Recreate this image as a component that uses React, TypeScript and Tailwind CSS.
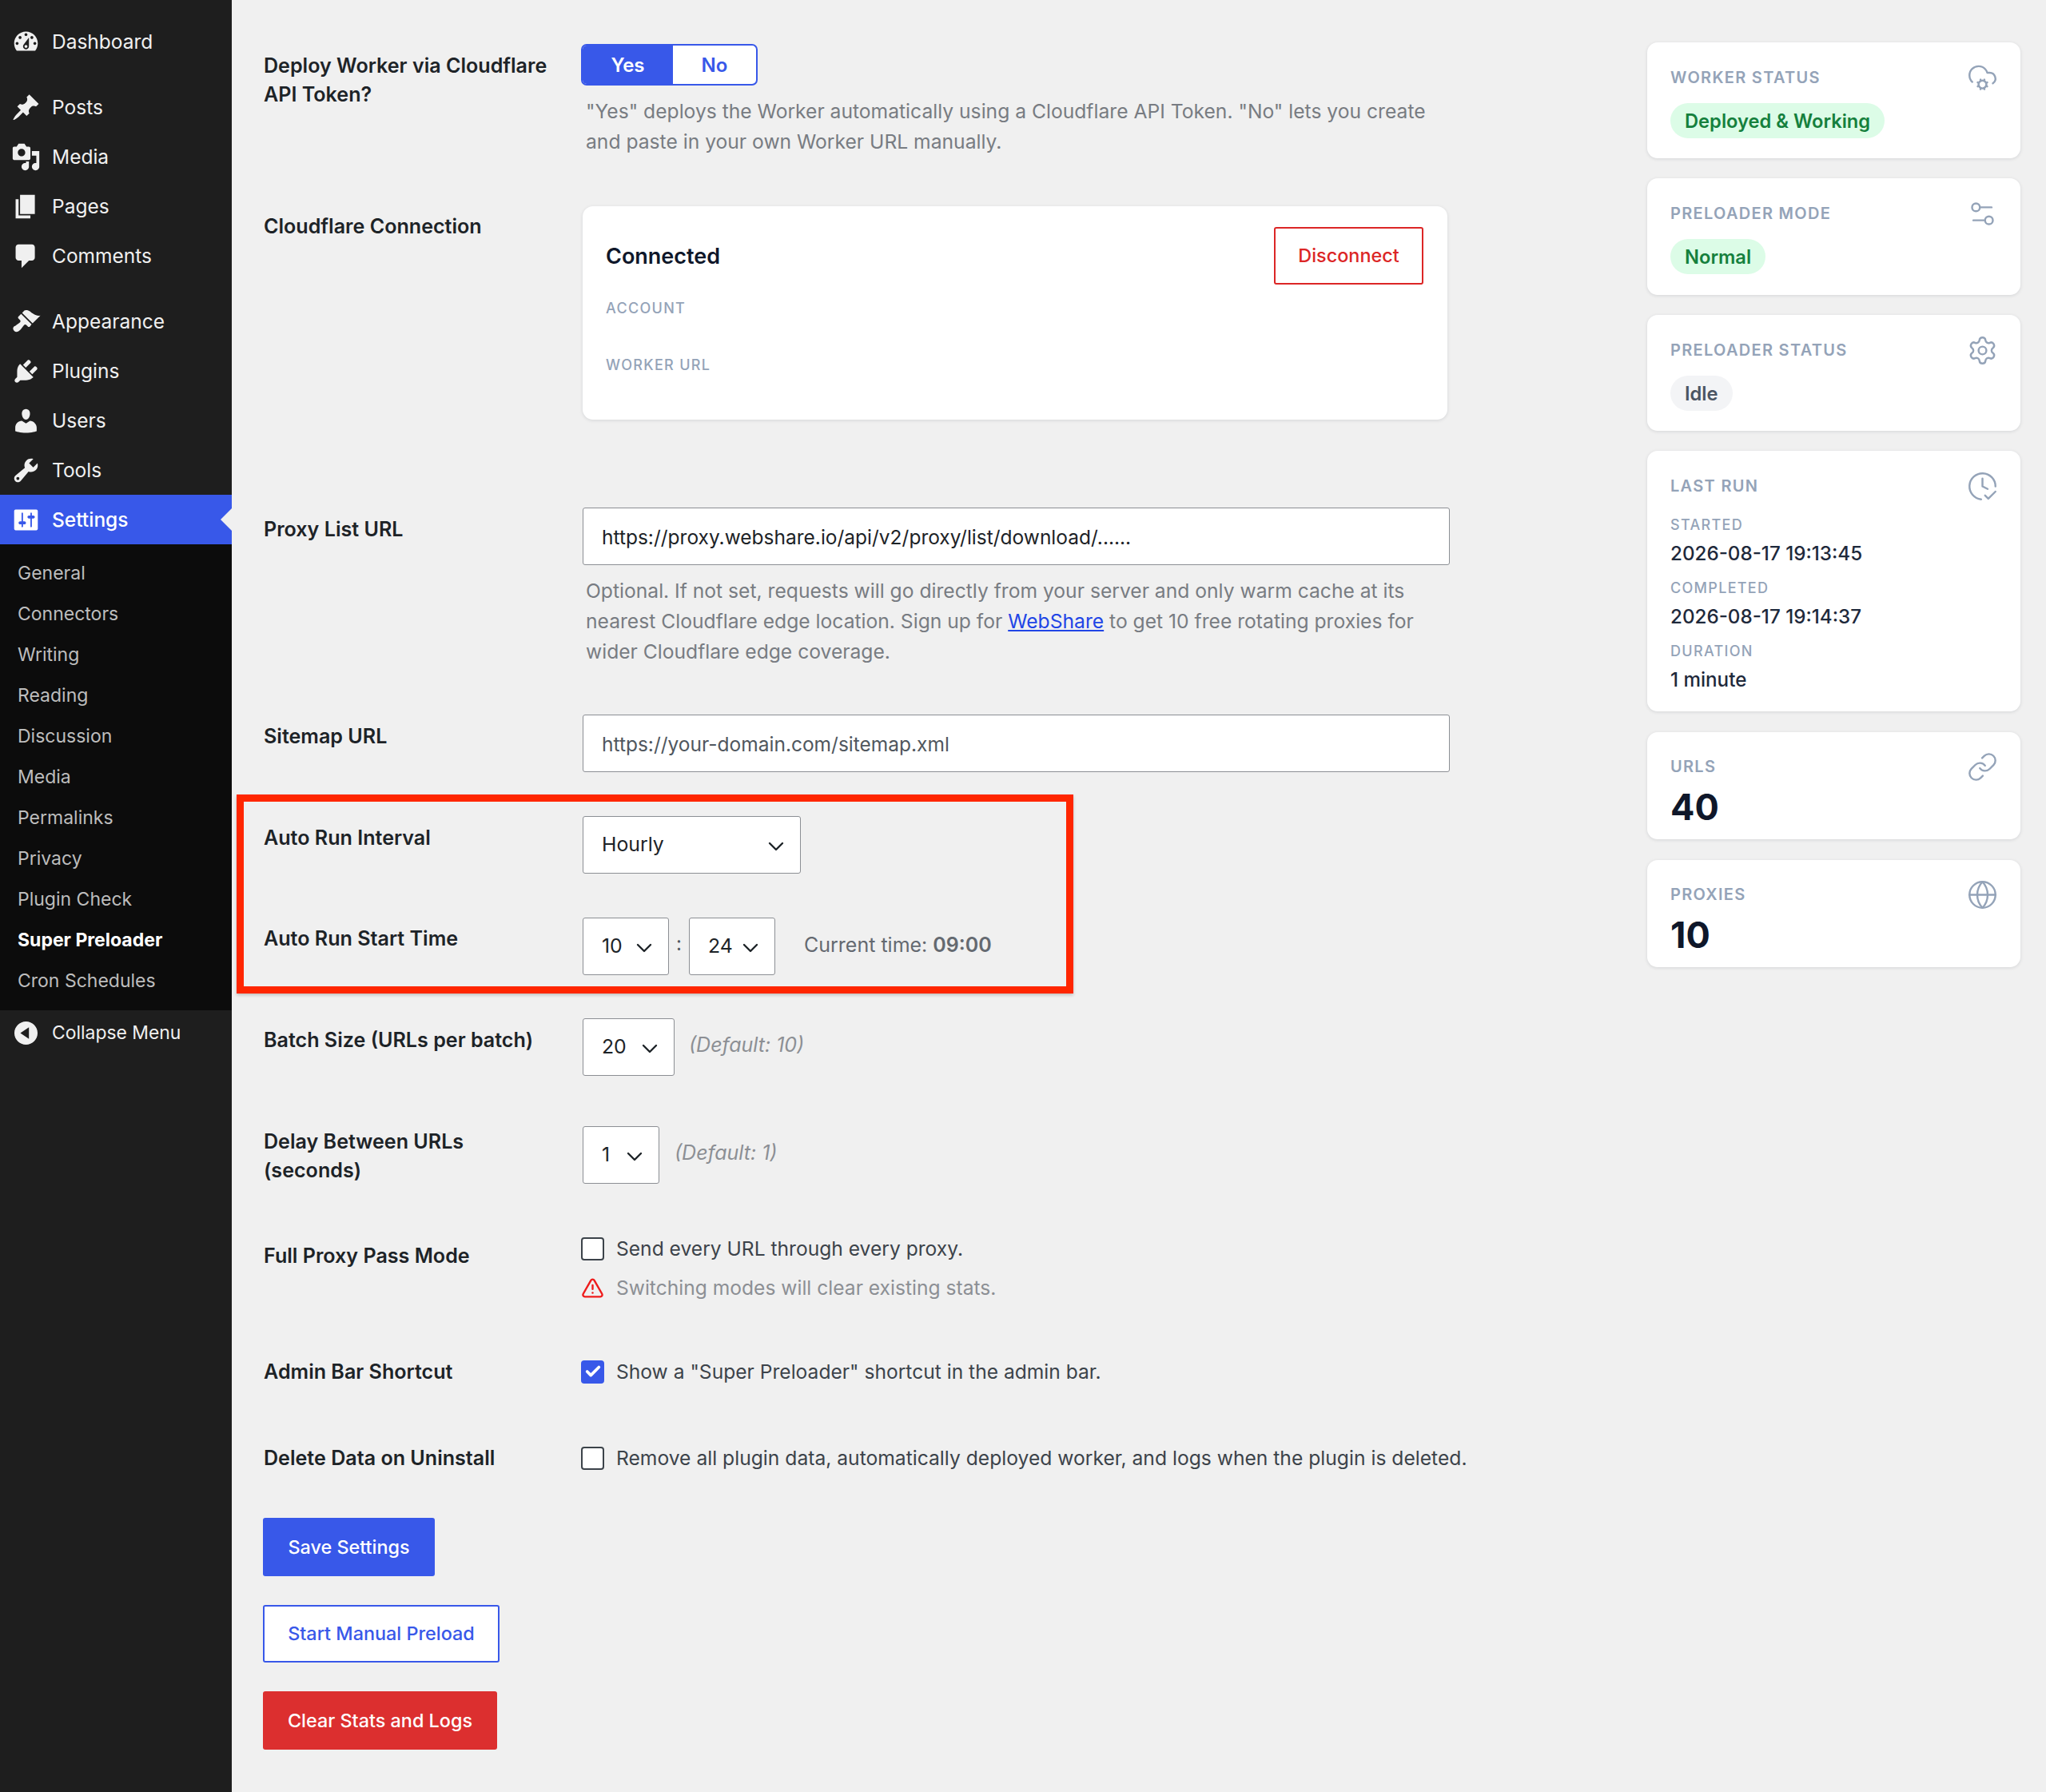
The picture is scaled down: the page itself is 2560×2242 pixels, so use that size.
import React from 'react';
import { ChevronDown, Check, CloudCog, Settings2, Settings, ClockCheck, Link, Globe, TriangleAlert } from 'lucide-react';

const dash = {
  dashboard: 'M3.76 16h12.48c1.1-1.37 1.76-3.11 1.76-5 0-4.42-3.58-8-8-8s-8 3.58-8 8c0 1.89.66 3.63 1.76 5zM10 4c.55 0 1 .45 1 1s-.45 1-1 1-1-.45-1-1 .45-1 1-1zM6 6c.55 0 1 .45 1 1s-.45 1-1 1-1-.45-1-1 .45-1 1-1zm8 0c.55 0 1 .45 1 1s-.45 1-1 1-1-.45-1-1 .45-1 1-1zm-5.37 5.55L12 7v6c0 1.1-.9 2-2 2s-2-.9-2-2c0-.57.24-1.08.63-1.45zM4 10c.55 0 1 .45 1 1s-.45 1-1 1-1-.45-1-1 .45-1 1-1zm12 0c.55 0 1 .45 1 1s-.45 1-1 1-1-.45-1-1 .45-1 1-1zm-5 3c0-.55-.45-1-1-1s-1 .45-1 1 .45 1 1 1 1-.45 1-1z',
  post: 'M10.44 3.02l1.82-1.82 6.36 6.35-1.83 1.82c-1.05-.68-2.48-.57-3.41.36l-.75.75c-.92.93-1.04 2.35-.35 3.41l-1.83 1.82-2.41-2.41-2.8 2.79c-.42.42-3.38 2.71-3.8 2.29s1.86-3.39 2.28-3.81l2.79-2.79L4.1 9.36l1.83-1.82c1.05.69 2.48.57 3.4-.36l.75-.75c.93-.92 1.05-2.35.36-3.41z',
  media: 'M13 11V4c0-.55-.45-1-1-1h-1.67L9 1H5L3.67 3H2c-.55 0-1 .45-1 1v7c0 .55.45 1 1 1h10c.55 0 1-.45 1-1zM7 4.5c1.38 0 2.5 1.12 2.5 2.5S8.38 9.5 7 9.5 4.5 8.38 4.5 7 5.62 4.5 7 4.5zM14 6h5v10.5c0 1.38-1.12 2.5-2.5 2.5S14 17.88 14 16.5s1.12-2.5 2.5-2.5c.17 0 .34.02.5.05V9h-3V6zm-4 8.05V13h2v3.5c0 1.38-1.12 2.5-2.5 2.5S7 17.88 7 16.5 8.12 14 9.5 14c.17 0 .34.02.5.05z',
  page: 'M6 15V2h10v13H6zm-1 1h8v2H3V5h2v11z',
  comments: 'M5 2h9c1.1 0 2 .9 2 2v7c0 1.1-.9 2-2 2h-2l-5 5v-5H5c-1.1 0-2-.9-2-2V4c0-1.1.9-2 2-2z',
  appearance: 'M14.48 11.06L7.41 3.99l1.5-1.5c.5-.56 2.3-.47 3.51.32 1.21.8 1.43 1.28 2.91 2.1 1.18.64 2.45 1.26 4.45.85zm-.71.71L6.7 4.7 4.93 6.47c-.39.39-.39 1.02 0 1.41l1.06 1.06c.39.39.39 1.03 0 1.42-.6.6-1.43 1.11-2.21 1.69-.35.26-.7.53-1.01.84C1.43 13.23.65 14.8 2 16.15c1.35 1.35 2.92.57 4.26-.78.31-.31.58-.66.84-1.01.58-.78 1.09-1.61 1.69-2.21.39-.39 1.03-.39 1.42 0l1.06 1.06c.39.39 1.02.39 1.41 0z',
  plugins: 'M13.11 4.36L9.87 7.6 8 5.73l3.24-3.24c.35-.34 1.05-.2 1.56.32.52.51.66 1.21.31 1.55zm-8 1.77l.91-1.12 9.01 9.01-1.19.84c-.71.71-2.63 1.16-3.82 1.16H6.14L4.9 17.26c-.59.59-1.54.59-2.12 0-.59-.58-.59-1.53 0-2.12l1.24-1.24v-3.88c0-1.13.4-3.19 1.09-3.89zm7.26 3.97l3.24-3.24c.34-.35 1.04-.21 1.55.31.52.51.66 1.21.31 1.55l-3.24 3.25z',
  users: 'M10 9.25c-2.27 0-2.73-3.44-2.73-3.44C7 4.02 7.82 2 9.97 2c2.16 0 2.98 2.02 2.71 3.81 0 0-.41 3.44-2.68 3.44zm0 2.57L12.72 10c2.39 0 4.52 2.33 4.52 4.53v2.49s-3.65 1.13-7.24 1.13c-3.65 0-7.24-1.13-7.24-1.13v-2.49c0-2.25 1.94-4.48 4.47-4.48z',
  tools: 'M16.68 9.77c-1.34 1.34-3.3 1.67-4.95.99l-5.41 6.52c-.99.99-2.59.99-3.58 0s-.99-2.59 0-3.57l6.52-5.42c-.68-1.65-.35-3.61.99-4.95 1.28-1.28 3.12-1.62 4.72-1.06l-2.89 2.89 2.82 2.82 2.86-2.87c.53 1.58.18 3.39-1.08 4.65zM3.81 16.21c.4.39 1.04.39 1.43 0 .4-.4.4-1.04 0-1.43-.39-.4-1.03-.4-1.43 0-.39.39-.39 1.03 0 1.43z',
  settings: 'M18 16V4c0-.55-.45-1-1-1H3c-.55 0-1 .45-1 1v12c0 .55.45 1 1 1h14c.55 0 1-.45 1-1zM8 11h1c.55 0 1 .45 1 1s-.45 1-1 1H8v1.5c0 .28-.22.5-.5.5s-.5-.22-.5-.5V13H6c-.55 0-1-.45-1-1s.45-1 1-1h1V5.5c0-.28.22-.5.5-.5s.5.22.5.5V11zm5-2h-1c-.55 0-1-.45-1-1s.45-1 1-1h1V5.5c0-.28.22-.5.5-.5s.5.22.5.5V7h1c.55 0 1 .45 1 1s-.45 1-1 1h-1v5.5c0 .28-.22.5-.5.5s-.5-.22-.5-.5V9z',
  collapse: 'M10 2.16c4.33 0 7.84 3.51 7.84 7.84s-3.51 7.84-7.84 7.84S2.16 14.33 2.16 10 5.71 2.16 10 2.16zm2 11.72V6.12L6.18 9.97z',
};

const DashIcon = ({ d }: { d: string }) => (
  <svg viewBox="0 0 20 20" className="w-[37px] h-[37px] shrink-0 fill-current" fillRule="evenodd">
    <path d={d} />
  </svg>
);

const MenuItem = ({ icon, label, active, className = '' }: { icon: string; label: string; active?: boolean; className?: string }) => (
  <div className={`relative flex items-center h-[62px] pl-[14px] gap-[14px] text-[24.5px] ${active ? 'bg-[#3858e9] text-white font-medium' : 'text-[#f0f0f0]'} ${className}`}>
    <DashIcon d={icon} />
    <span>{label}</span>
    {active && (
      <span className="absolute right-0 top-[17px] w-0 h-0 border-y-[14px] border-y-transparent border-r-[14px] border-r-[#f0f0f0]" />
    )}
  </div>
);

const Sidebar = () => (
  <div className="w-[290px] shrink-0 bg-[#1e1e1e] pt-[21px]">
    <MenuItem icon={dash.dashboard} label="Dashboard" className="mb-[20px]" />
    <MenuItem icon={dash.post} label="Posts" />
    <MenuItem icon={dash.media} label="Media" />
    <MenuItem icon={dash.page} label="Pages" />
    <MenuItem icon={dash.comments} label="Comments" className="mb-[20px]" />
    <MenuItem icon={dash.appearance} label="Appearance" />
    <MenuItem icon={dash.plugins} label="Plugins" />
    <MenuItem icon={dash.users} label="Users" />
    <MenuItem icon={dash.tools} label="Tools" />
    <MenuItem icon={dash.settings} label="Settings" active />
    <div className="bg-[#0c0c0c] py-[11px] pl-[22px] text-[23px] text-[#bdbdbd]">
      {['General', 'Connectors', 'Writing', 'Reading', 'Discussion', 'Media', 'Permalinks', 'Privacy', 'Plugin Check'].map((s) => (
        <div key={s} className="h-[51px] flex items-center">{s}</div>
      ))}
      <div className="h-[51px] flex items-center font-bold text-white">Super Preloader</div>
      <div className="h-[51px] flex items-center">Cron Schedules</div>
    </div>
    <div className="flex items-center h-[57px] pl-[14px] gap-[14px] text-[22.9px] text-[#f0f0f0]">
      <DashIcon d={dash.collapse} />
      <span>Collapse Menu</span>
    </div>
  </div>
);

const Row = ({ label, className = '', labelClass = 'pt-[9px]', children }: { label: React.ReactNode; className?: string; labelClass?: string; children: React.ReactNode }) => (
  <div className={`flex ${className}`}>
    <div className={`w-[399px] shrink-0 text-[25.1px] leading-[36px] font-semibold text-[#1d2327] ${labelClass}`}>{label}</div>
    <div className="flex-1 min-w-0">{children}</div>
  </div>
);

const Select = ({ value, width }: { value: string; width: string }) => (
  <div className={`${width} h-[72px] shrink-0 flex items-center justify-between pl-[23px] pr-[14px] bg-white border border-[#8c8f94] rounded-[3px] text-[24.8px] text-[#1d2327]`}>
    <span>{value}</span>
    <ChevronDown className="w-[32px] h-[32px] mt-[3px] text-[#1d2327]" strokeWidth={1.8} />
  </div>
);

const TextInput = ({ value, muted }: { value: string; muted?: boolean }) => (
  <div className={`w-[1085px] h-[72px] flex items-center px-[23px] pt-[2px] bg-white border border-[#8c8f94] rounded-[3px] text-[24.5px] ${muted ? 'text-[#50575e]' : 'text-[#1d2327]'}`}>
    {value}
  </div>
);

const Checkbox = ({ checked }: { checked?: boolean }) => (
  <span className={`w-[29px] h-[29px] shrink-0 flex items-center justify-center rounded-[4px] ${checked ? 'bg-[#3858e9]' : 'bg-white border-2 border-[#3c434a]'}`}>
    {checked && <Check className="w-[22px] h-[22px] text-white" strokeWidth={4} />}
  </span>
);

const Help = ({ children, className = '' }: { children: React.ReactNode; className?: string }) => (
  <p className={`ml-[4px] text-[24.65px] leading-[38px] text-[#787c82] ${className}`}>{children}</p>
);

const Card = ({ label, icon: Icon, children, className = '' }: { label: string; icon: React.ElementType; children: React.ReactNode; className?: string }) => (
  <div className={`bg-white rounded-[13px] shadow-[0_1px_4px_rgba(15,23,42,0.12)] pl-[29px] pr-[28px] ${className}`}>
    <div className="flex items-center justify-between h-[24px]">
      <span className="text-[20px] font-semibold tracking-[1.3px] text-[#94a3b8] uppercase">{label}</span>
      <Icon className="w-[39px] h-[39px] text-[#94a3b8]" strokeWidth={1.5} />
    </div>
    {children}
  </div>
);

const Pill = ({ children, gray }: { children: React.ReactNode; gray?: boolean }) => (
  <span className={`inline-flex items-center h-[44px] px-[18px] pt-[2px] rounded-full text-[23.7px] font-semibold ${gray ? 'bg-[#f3f4f6] text-[#4b5563]' : 'bg-[#dcfce7] text-[#15803d]'}`}>
    {children}
  </span>
);

const RunStat = ({ label, value, className = '' }: { label: string; value: string; className?: string }) => (
  <div className={className}>
    <div className="text-[18px] leading-[22px] font-medium tracking-[1.3px] text-[#94a3b8] uppercase">{label}</div>
    <div className="mt-[11px] text-[24.2px] leading-[28px] font-medium text-[#1e293b]">{value}</div>
  </div>
);

const Sidebar2 = () => (
  <div className="w-[467px] shrink-0 mr-[32px] pt-[53px] flex flex-col">
    <Card label="Worker Status" icon={CloudCog} className="pt-[32px] pb-[25px]">
      <div className="mt-[20px] flex"><Pill>Deployed &amp; Working</Pill></div>
    </Card>
    <Card label="Preloader Mode" icon={Settings2} className="mt-[25px] pt-[32px] pb-[26px]">
      <div className="mt-[20px] flex"><Pill>Normal</Pill></div>
    </Card>
    <Card label="Preloader Status" icon={Settings} className="mt-[25px] pt-[32px] pb-[25px]">
      <div className="mt-[20px] flex"><Pill gray>Idle</Pill></div>
    </Card>
    <Card label="Last Run" icon={ClockCheck} className="mt-[25px] pt-[32px] pb-[25px]">
      <RunStat label="Started" value="2026-08-17 19:13:45" className="mt-[26px]" />
      <RunStat label="Completed" value="2026-08-17 19:14:37" className="mt-[18px]" />
      <RunStat label="Duration" value="1 minute" className="mt-[18px]" />
    </Card>
    <Card label="URLs" icon={Link} className="mt-[26px] pt-[31px] pb-[13px]">
      <div className="mt-[12px] text-[45px] leading-[54px] font-bold text-[#0f172a]">40</div>
    </Card>
    <Card label="Proxies" icon={Globe} className="mt-[26px] pt-[31px] pb-[13px]">
      <div className="mt-[12px] text-[45px] leading-[54px] font-bold text-[#0f172a]">10</div>
    </Card>
  </div>
);

const Form = () => (
  <div className="flex-1 min-w-0 pl-[40px] pt-[55px]">
    <Row label={<>Deploy Worker via Cloudflare<br />API Token?</>}>
      <div className="flex ml-[-2px] w-[221px] h-[52px] border-2 border-[#3858e9] rounded-[7px] overflow-hidden bg-white text-[24px] font-semibold">
        <div className="w-[113px] pt-[2px] flex items-center justify-center bg-[#3858e9] text-white">Yes</div>
        <div className="flex-1 pt-[2px] flex items-center justify-center text-[#3858e9]">No</div>
      </div>
      <Help className="mt-[13px]">"Yes" deploys the Worker automatically using a Cloudflare API Token. "No" lets you create<br />and paste in your own Worker URL manually.</Help>
    </Row>

    <Row label="Cloudflare Connection" labelClass="pt-[7px]" className="mt-[62px]">
      <div className="w-[1082px] h-[267px] bg-white rounded-[13px] shadow-[0_1px_4px_rgba(15,23,42,0.12)] pl-[29px] pr-[30px] pt-[26px]">
        <div className="flex items-start justify-between">
          <div className="pt-[19px] text-[27px] leading-[36px] font-semibold text-[#0f172a]">Connected</div>
          <div className="w-[187px] h-[72px] flex items-center justify-center bg-white border-2 border-[#dc2626] rounded-[3px] text-[23.4px] font-medium text-[#dc2626]">Disconnect</div>
        </div>
        <div className="mt-[18px] text-[18px] leading-[24px] font-medium tracking-[1.3px] text-[#94a3b8]">ACCOUNT</div>
        <div className="mt-[47px] text-[18px] leading-[24px] font-medium tracking-[1.3px] text-[#94a3b8]">WORKER URL</div>
      </div>
    </Row>

    <Row label="Proxy List URL" className="mt-[110px]">
      <TextInput value="https://proxy.webshare.io/api/v2/proxy/list/download/......" />
      <Help className="mt-[13px]">
        Optional. If not set, requests will go directly from your server and only warm cache at its<br />
        nearest Cloudflare edge location. Sign up for <span className="text-[#2145e6] underline">WebShare</span> to get 10 free rotating proxies for<br />
        wider Cloudflare edge coverage.
      </Help>
    </Row>

    <Row label="Sitemap URL" className="mt-[60px]">
      <TextInput value="https://your-domain.com/sitemap.xml" muted />
    </Row>

    <Row label="Auto Run Interval" className="mt-[55px]">
      <Select value="Hourly" width="w-[273px]" />
    </Row>

    <Row label="Auto Run Start Time" labelClass="pt-[8px]" className="mt-[55px]">
      <div className="flex items-center">
        <Select value="10" width="w-[108px]" />
        <span className="w-[25px] text-center text-[24px] text-[#50575e] mt-[-6px]">:</span>
        <Select value="24" width="w-[108px]" />
        <span className="ml-[36px] mt-[-2px] text-[25px] text-[#646970]">Current time: <strong className="font-semibold">09:00</strong></span>
      </div>
    </Row>

    <Row label="Batch Size (URLs per batch)" className="mt-[54px]">
      <div className="flex items-center">
        <Select value="20" width="w-[115px]" />
        <span className="ml-[18px] mt-[-4px] text-[25px] italic text-[#8c8f94]">(Default: 10)</span>
      </div>
    </Row>

    <Row label={<>Delay Between URLs<br />(seconds)</>} labelClass="pt-[1px]" className="mt-[63px]">
      <div className="flex items-center">
        <Select value="1" width="w-[96px]" />
        <span className="ml-[19px] mt-[-4px] text-[25px] italic text-[#8c8f94]">(Default: 1)</span>
      </div>
    </Row>

    <Row label="Full Proxy Pass Mode" labelClass="pt-[6px]" className="mt-[65px]">
      <div className="flex items-center ml-[-2px] h-[30px] gap-[15px] text-[24.6px] text-[#3c434a]">
        <Checkbox />
        <span>Send every URL through every proxy.</span>
      </div>
      <div className="flex items-center ml-[-2px] h-[30px] mt-[19px] gap-[15px] text-[24.6px] text-[#8c8f94]">
        <TriangleAlert className="w-[29px] h-[29px] text-[#ee1c1c]" strokeWidth={2} />
        <span>Switching modes will clear existing stats.</span>
      </div>
    </Row>

    <Row label="Admin Bar Shortcut" labelClass="mt-[-3px]" className="mt-[75px]">
      <div className="flex items-center ml-[-2px] h-[30px] gap-[15px] text-[24.6px] text-[#3c434a]">
        <Checkbox checked />
        <span>Show a "Super Preloader" shortcut in the admin bar.</span>
      </div>
    </Row>

    <Row label="Delete Data on Uninstall" labelClass="mt-[-3px]" className="mt-[75px]">
      <div className="flex items-center ml-[-2px] h-[30px] gap-[15px] text-[24.65px] text-[#3c434a] whitespace-nowrap">
        <Checkbox />
        <span>Remove all plugin data, automatically deployed worker, and logs when the plugin is deleted.</span>
      </div>
    </Row>

    <div className="mt-[57px] ml-[-1px] flex flex-col items-start gap-[36px] text-[23.4px] font-medium">
      <div className="w-[215px] h-[73px] flex items-center justify-center bg-[#3858e9] text-white rounded-[3px]">Save Settings</div>
      <div className="w-[296px] h-[72px] flex items-center justify-center bg-white border-2 border-[#3858e9] text-[#3858e9] rounded-[3px]">Start Manual Preload</div>
      <div className="w-[293px] h-[73px] flex items-center justify-center bg-[#dc2f2f] text-white rounded-[3px]">Clear Stats and Logs</div>
    </div>
  </div>
);

export default function App() {
  return (
    <div className="flex w-[2560px] h-[2242px] overflow-hidden bg-[#f0f0f0] font-['Inter',sans-serif]">
      <Sidebar />
      <div className="relative flex flex-1 min-w-0">
        <Form />
        <Sidebar2 />
        {/* annotation frame drawn over the screenshot */}
        <div className="absolute left-[6px] top-[994px] w-[1047px] h-[249px] border-[9px] border-[#ff2600] shadow-[0_2px_4px_rgba(0,0,0,0.2)] pointer-events-none" />
      </div>
    </div>
  );
}
